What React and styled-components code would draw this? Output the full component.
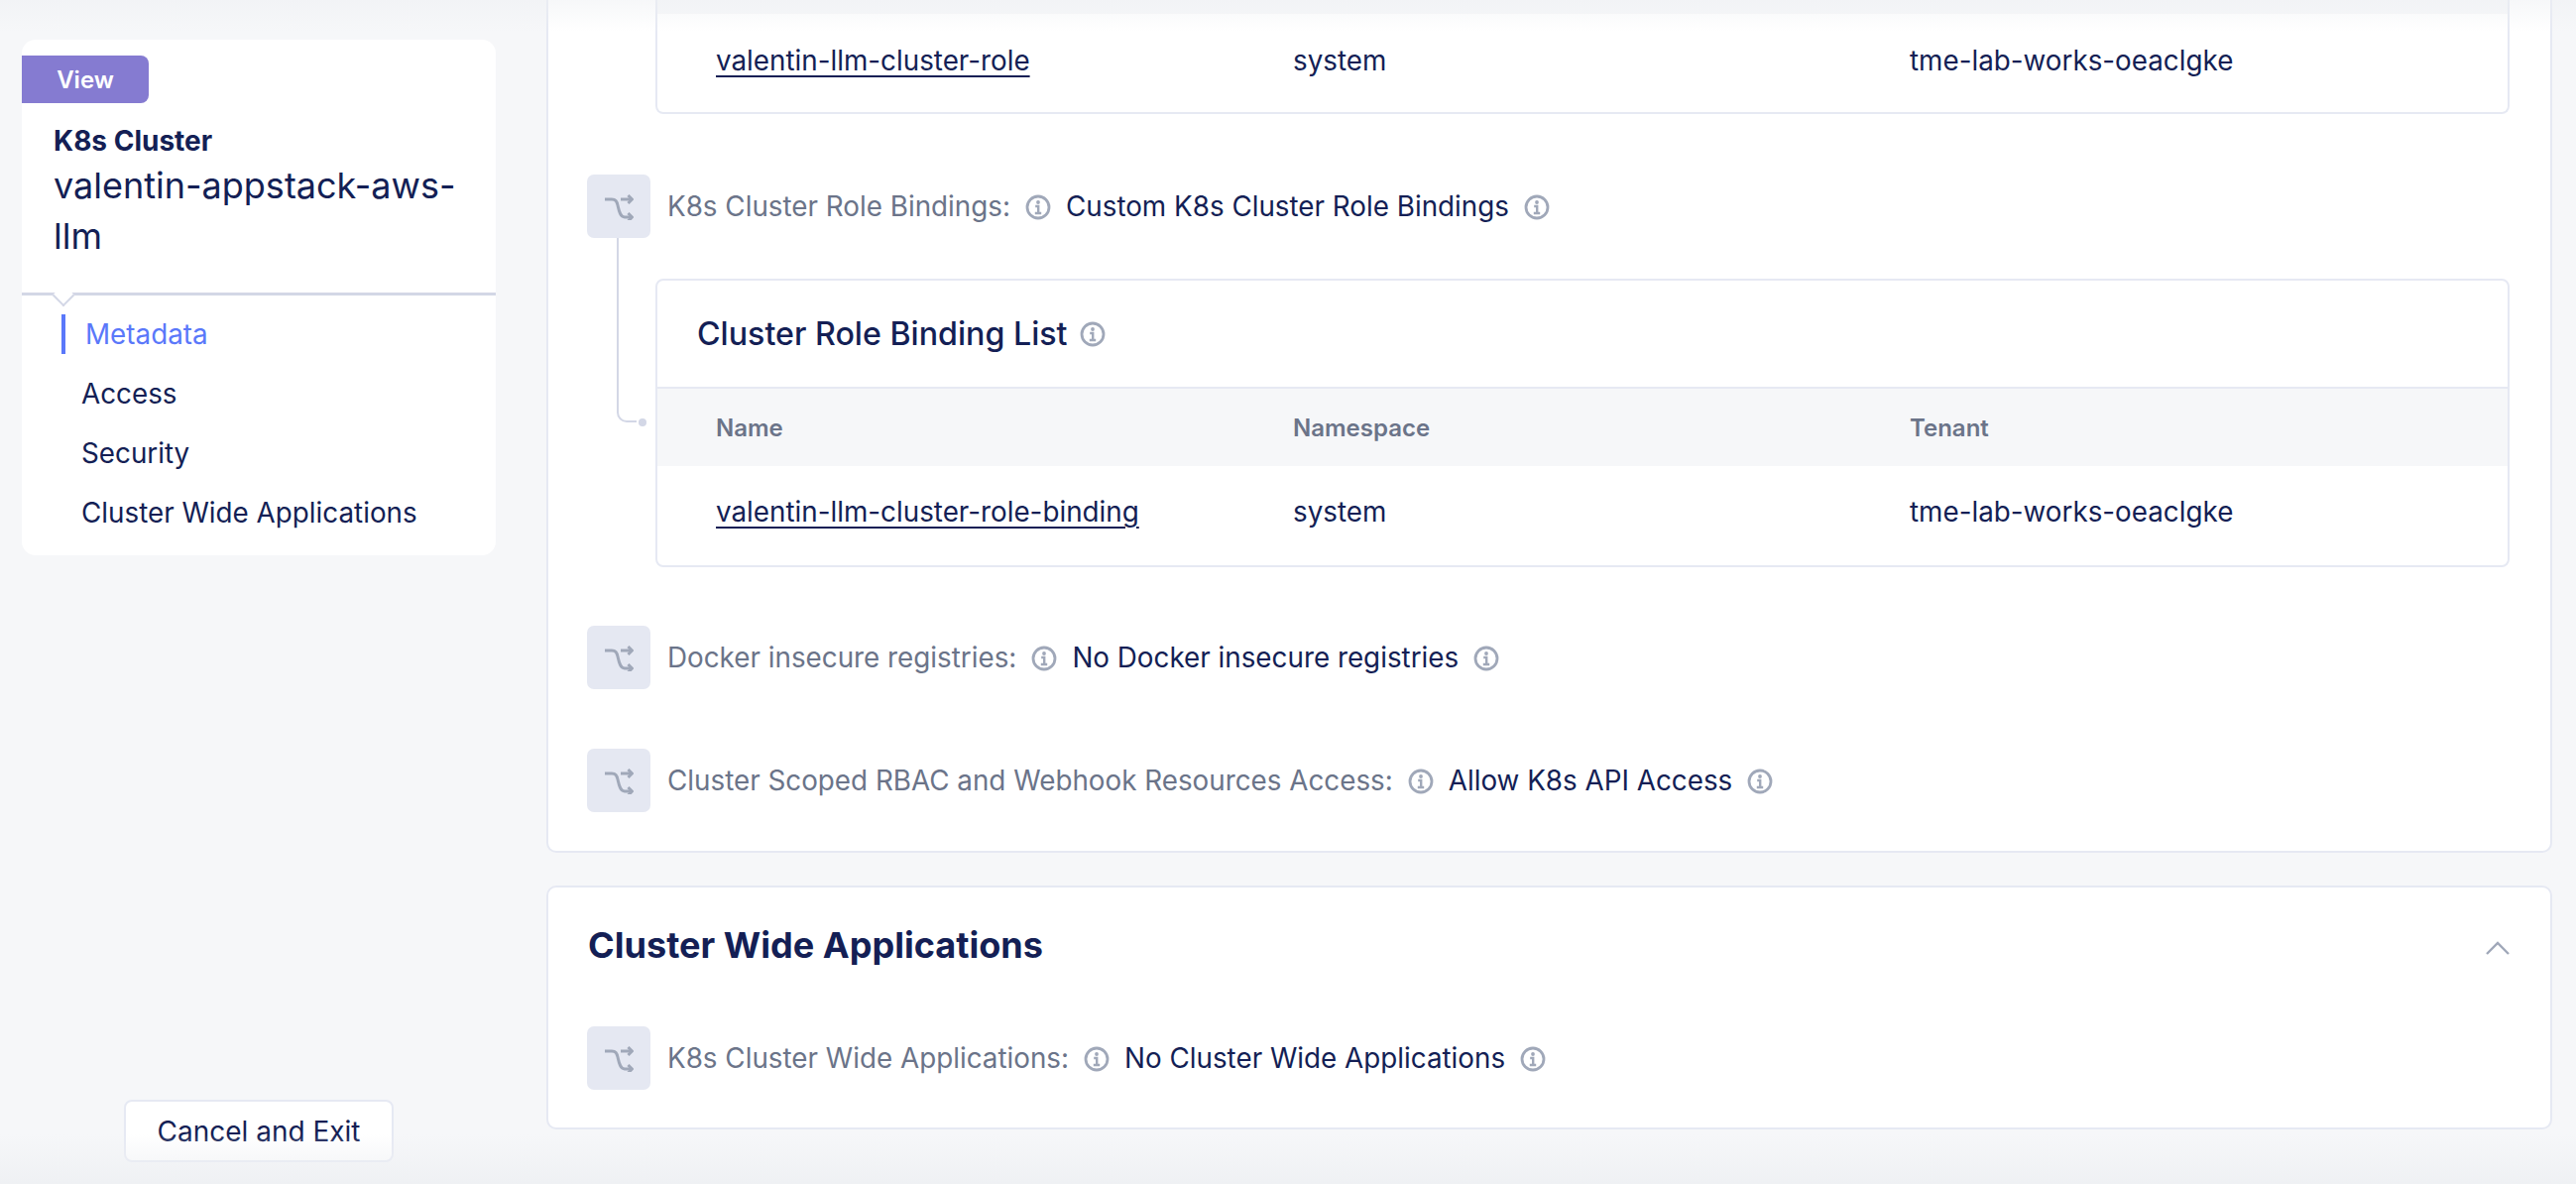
import styled, { createGlobalStyle } from "styled-components";

const navy = "#141f55";
const grey = "#6b7489";
const line = "#e6e9f3";

const GlobalStyle = createGlobalStyle`
  html, body {
    margin: 0;
    padding: 0;
    height: 100%;
    overflow: hidden;
    background: #f6f7f9;
    font-family: Inter, "Liberation Sans", sans-serif;
    color: ${navy};
  }
`;

const Page = styled.div`
  position: relative;
  display: flex;
  width: 2598px;
  height: 1194px;
  overflow: hidden;
`;

const TopFade = styled.div`
  position: absolute;
  top: 0;
  left: 0;
  right: 0;
  height: 32px;
  background: linear-gradient(rgba(238, 240, 243, 0.5), rgba(238, 240, 243, 0));
  pointer-events: none;
`;

const BottomFade = styled.div`
  position: absolute;
  bottom: 0;
  left: 0;
  right: 0;
  height: 50px;
  background: linear-gradient(rgba(238, 240, 243, 0), rgba(238, 240, 243, 0.9));
  pointer-events: none;
`;

const Sidebar = styled.aside`
  display: flex;
  flex-direction: column;
  align-items: flex-start;
  flex: 0 0 551px;
  box-sizing: border-box;
  padding: 40px 51px 22px 22px;
`;

const SideCard = styled.div`
  width: 100%;
  height: 520px;
  background: #fff;
  border-radius: 14px;
`;

const SideHead = styled.div`
  position: relative;
  height: 258px;
  box-sizing: border-box;
  padding-top: 16px;
  border-bottom: 3px solid #d3d7e6;

  &::after {
    content: "";
    position: absolute;
    left: 34px;
    bottom: -11px;
    width: 14px;
    height: 14px;
    background: #fff;
    border-right: 2px solid #d3d7e6;
    border-bottom: 2px solid #d3d7e6;
    transform: rotate(45deg);
  }
`;

const ViewTag = styled.div`
  display: flex;
  align-items: center;
  justify-content: center;
  width: 128px;
  height: 48px;
  box-sizing: border-box;
  background: #857bd1;
  border-radius: 0 8px 8px 0;
  color: #fff;
  font-size: 24px;
  font-weight: 600;
`;

const Kind = styled.div`
  margin: 20px 0 0 32px;
  font-size: 28px;
  line-height: 36px;
  font-weight: 700;
`;

const ClusterName = styled.div`
  margin: 2px 16px 0 32px;
  font-size: 36px;
  line-height: 51px;
`;

const Nav = styled.nav`
  display: flex;
  flex-direction: column;
  padding-top: 9px;
`;

const NavItem = styled.a`
  display: flex;
  align-items: center;
  height: 60px;
  padding-left: ${(p) => (p.$active ? "40px" : "60px")};
  font-size: 27.800px;
  color: ${(p) => (p.$active ? "#5a78fa" : navy)};

  &::before {
    content: "";
    display: ${(p) => (p.$active ? "block" : "none")};
    width: 4px;
    height: 40px;
    margin-right: 20px;
    background: #5a78fa;
  }
`;

const CancelButton = styled.button`
  align-self: center;
  margin-top: auto;
  width: 272px;
  height: 63px;
  background: #fff;
  border: 2px solid ${line};
  border-radius: 8px;
  font-family: inherit;
  font-size: 28px;
  color: ${navy};
`;

const Main = styled.main`
  flex: 1;
  display: flex;
  flex-direction: column;
  gap: 33px;
  padding-right: 24px;
  min-width: 0;
`;

const Section = styled.section`
  background: #fff;
  border: 2px solid ${line};
  border-top: ${(p) => (p.$clipped ? "none" : `2px solid ${line}`)};
  border-radius: ${(p) => (p.$clipped ? "0 0 10px 10px" : "10px")};
  padding: ${(p) => (p.$clipped ? "0 41px 39px 39px" : "0 41px 38px 39px")};
`;

const SectionHead = styled.div`
  display: flex;
  align-items: center;
  justify-content: space-between;
  height: 116px;
  margin-bottom: 24px;
`;

const SectionTitle = styled.h2`
  margin: 0 0 0 1px;
  font-size: 36.100px;
  font-weight: 700;
`;

const Chevron = styled.svg`
  display: block;
  margin-right: -1px;
  margin-top: 6px;
`;

const Row = styled.div`
  display: flex;
  align-items: center;
  height: 64px;
  margin-top: ${(p) => p.$top || 0}px;
  font-size: 27.800px;
`;

const IconBox = styled.div`
  display: flex;
  align-items: center;
  justify-content: center;
  flex: 0 0 64px;
  height: 64px;
  margin-right: 17px;
  background: #e5e8f2;
  border-radius: 7px;
`;

const Label = styled.span`
  color: ${grey};
`;

const Value = styled.span`
  color: ${navy};
`;

const InfoSlot = styled.span`
  display: block;
  flex: none;
  height: 26px;
  margin: 0 15px;
`;

const Tree = styled.div`
  position: relative;
`;

const Connector = styled.div`
  position: absolute;
  left: 30px;
  top: 64px;
  width: 20px;
  height: 186px;
  box-sizing: border-box;
  border-left: 2.500px solid #d3d7e6;
  border-bottom: 2.500px solid #d3d7e6;
  border-bottom-left-radius: 10px;

  &::after {
    content: "";
    position: absolute;
    left: 20px;
    bottom: -5.500px;
    width: 8px;
    height: 8px;
    border-radius: 50%;
    background: #d3d7e6;
  }
`;

const TableCard = styled.div`
  margin: ${(p) => p.$top || 0}px 0 0 69px;
  background: #fff;
  border: 2px solid ${line};
  border-top: ${(p) => (p.$clipped ? "none" : `2px solid ${line}`)};
  border-radius: ${(p) => (p.$clipped ? "0 0 8px 8px" : "8px")};
`;

const TableTitle = styled.div`
  display: flex;
  align-items: center;
  height: 107px;
  padding-left: 40px;
  font-size: 32.200px;
  font-weight: 500;

  svg {
    margin-left: 12px;
  }
`;

const Grid = styled.div`
  display: grid;
  grid-template-columns: 582px 622px 1fr;
  padding-left: 59px;
  align-items: center;
`;

const HeadRow = styled(Grid)`
  height: 78px;
  border-top: 2px solid ${line};
  background: #f6f7f9;
  color: ${grey};
  font-size: 24px;
  font-weight: 600;
`;

const HeadSliver = styled.div`
  height: 14px;
  background: #f6f7f9;
`;

const BodyRow = styled(Grid)`
  height: ${(p) => p.$h}px;
  font-size: 27.800px;
  padding-bottom: ${(p) => p.$pad}px;
  box-sizing: border-box;
`;

const RowLink = styled.a`
  justify-self: start;
  color: ${navy};
  text-decoration: underline;
  text-underline-offset: 5px;
  text-decoration-thickness: 2px;
`;

function BranchIcon() {
  return (
    <svg width="30" height="28" viewBox="0 -2 30 28" fill="none" stroke="#a0a8b9" strokeWidth="3">
      <path d="M1 5h7c4 0 5 2 6 6s2 12 7 12h7" />
      <path d="M17 5h11" />
      <path d="M24.500 1L28.500 5 24.500 9" />
      <path d="M24.500 19L28.500 23 24.500 27" />
    </svg>
  );
}

function InfoIcon() {
  return (
    <svg width="26" height="26" viewBox="0 0 26 26" fill="none" stroke="#a0a8b9" strokeWidth="2.800">
      <circle cx="13" cy="13" r="11" />
      <circle cx="13" cy="8" r="1.900" fill="#a0a8b9" stroke="none" />
      <path d="M10.200 12h3v7M9.800 19h6.400" strokeWidth="2.400" />
    </svg>
  );
}

function Field({ label, value, top }) {
  return (
    <Row $top={top}>
      <IconBox>
        <BranchIcon />
      </IconBox>
      <Label>{label}</Label>
      <InfoSlot>
        <InfoIcon />
      </InfoSlot>
      <Value>{value}</Value>
      <InfoSlot>
        <InfoIcon />
      </InfoSlot>
    </Row>
  );
}

function TableRow({ name, height, pad }) {
  return (
    <BodyRow $h={height} $pad={pad}>
      <RowLink>{name}</RowLink>
      <span>system</span>
      <span>tme-lab-works-oeaclgke</span>
    </BodyRow>
  );
}

export default function App() {
  return (
    <Page>
      <GlobalStyle />
      <Sidebar>
        <SideCard>
          <SideHead>
            <ViewTag>View</ViewTag>
            <Kind>K8s Cluster</Kind>
            <ClusterName>valentin-appstack-aws-llm</ClusterName>
          </SideHead>
          <Nav>
            <NavItem $active>Metadata</NavItem>
            <NavItem>Access</NavItem>
            <NavItem>Security</NavItem>
            <NavItem>Cluster Wide Applications</NavItem>
          </Nav>
        </SideCard>
        <CancelButton>Cancel and Exit</CancelButton>
      </Sidebar>
      <Main>
        <Section $clipped>
          <TableCard $clipped>
            <HeadSliver />
            <TableRow name="valentin-llm-cluster-role" height={99} pad={6} />
          </TableCard>
          <Tree>
            <Field
              top={61}
              label="K8s Cluster Role Bindings:"
              value="Custom K8s Cluster Role Bindings"
            />
            <Connector />
            <TableCard $top={41}>
              <TableTitle>
                Cluster Role Binding List
                <InfoIcon />
              </TableTitle>
              <HeadRow>
                <span>Name</span>
                <span>Namespace</span>
                <span>Tenant</span>
              </HeadRow>
              <TableRow name="valentin-llm-cluster-role-binding" height={100} pad={8} />
            </TableCard>
          </Tree>
          <Field top={59} label="Docker insecure registries:" value="No Docker insecure registries" />
          <Field
            top={60}
            label="Cluster Scoped RBAC and Webhook Resources Access:"
            value="Allow K8s API Access"
          />
        </Section>
        <Section>
          <SectionHead>
            <SectionTitle>Cluster Wide Applications</SectionTitle>
            <Chevron width="26" height="16" viewBox="0 0 26 16" fill="none" stroke="#a0a8b9" strokeWidth="2.400">
              <path d="M2 14L13 3l11 11" />
            </Chevron>
          </SectionHead>
          <Field label="K8s Cluster Wide Applications:" value="No Cluster Wide Applications" />
        </Section>
      </Main>
      <TopFade />
      <BottomFade />
    </Page>
  );
}
